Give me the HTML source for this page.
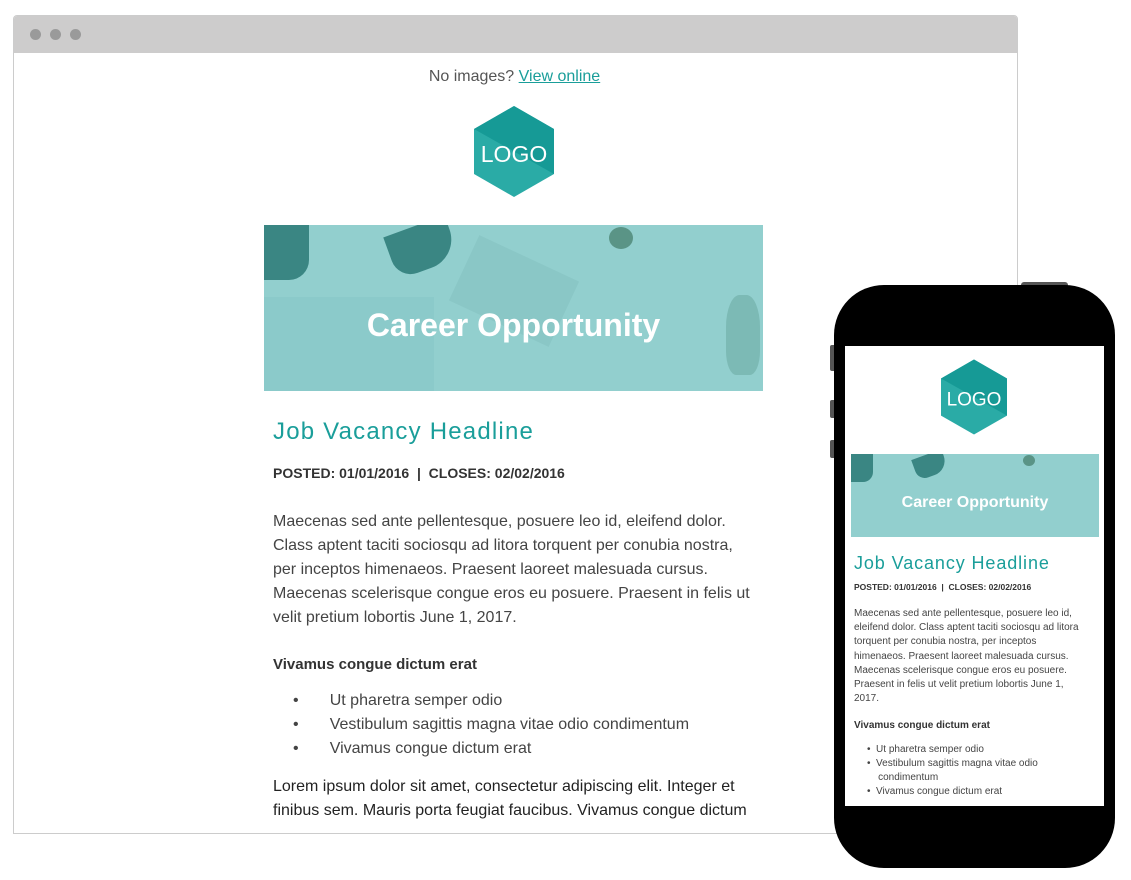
<!DOCTYPE html>
<html><head><style>
*{margin:0;padding:0;box-sizing:border-box}
body{width:1131px;height:880px;background:#fff;position:relative;overflow:hidden;font-family:"Liberation Sans",Arial,sans-serif;color:#444}
.a{position:absolute;white-space:nowrap}
.frame{position:absolute;left:13px;top:15px;width:1005px;height:819px;border:1px solid #ccc;border-radius:4px 4px 0 0;overflow:hidden;background:#fff}
.bar{position:absolute;left:0;top:0;width:100%;height:37px;background:#cdcccc}
.dot{position:absolute;top:13px;width:11px;height:11px;border-radius:50%;background:#9a9a9a}
.teal{color:#1a9e9a}
.banner{position:absolute;background:#92cfce;overflow:hidden}
.banner .t{position:absolute;width:100%;text-align:center;color:#fff;font-weight:bold}
</style></head><body>
<div class="frame">
 <div class="bar"><div class="dot" style="left:16px"></div><div class="dot" style="left:36px"></div><div class="dot" style="left:56px"></div></div>
</div>
<div class="a" style="left:0;width:1029px;text-align:center;top:68px;font-size:16px;color:#555">No images? <span class="teal" style="text-decoration:underline">View online</span></div>
<svg class="a" style="left:474px;top:106px" width="80" height="91" viewBox="0 0 80 91">
<polygon points="40,0 80,23 80,68 40,91 0,68 0,23" fill="#2aaba6"/>
<polygon points="40,0 80,23 80,68 0,23" fill="#169a96"/>
<text x="40" y="56" text-anchor="middle" font-family="Liberation Sans" font-size="23" fill="#fff">LOGO</text></svg>
<div class="banner" style="left:264px;top:225px;width:499px;height:166px">
 <div class="a" style="left:0;top:0;width:45px;height:55px;background:#3a8683;border-radius:0 0 20px 0"></div>
 <div class="a" style="left:125px;top:0;width:65px;height:45px;background:#3a8683;border-radius:0 0 30px 20px;transform:rotate(-20deg)"></div>
 <div class="a" style="left:345px;top:2px;width:24px;height:22px;background:#5a9486;border-radius:50%"></div>
 <div class="a" style="left:0;top:72px;width:170px;height:94px;background:#8bcaca"></div>
 <div class="a" style="left:195px;top:30px;width:110px;height:72px;background:#8ac7c6;transform:rotate(25deg)"></div>
 <div class="a" style="left:462px;top:70px;width:34px;height:80px;background:#7cbab5;border-radius:40% 40% 30% 30%"></div>
 <div class="t" style="top:82px;font-size:32px">Career Opportunity</div>
</div>
<div class="a teal" style="left:273px;top:418px;font-size:24px;letter-spacing:1.2px">Job Vacancy Headline</div>
<div class="a" style="left:273px;top:465px;font-size:14px;font-weight:bold;color:#333">POSTED: 01/01/2016 &nbsp;|&nbsp; CLOSES: 02/02/2016</div>
<div class="a" style="left:273px;top:510px;font-size:16px;line-height:24px;color:#444">Maecenas sed ante pellentesque, posuere leo id, eleifend dolor.<br>Class aptent taciti sociosqu ad litora torquent per conubia nostra,<br>per inceptos himenaeos. Praesent laoreet malesuada cursus.<br>Maecenas scelerisque congue eros eu posuere. Praesent in felis ut<br>velit pretium lobortis June 1, 2017.</div>
<div class="a" style="left:273px;top:656px;font-size:15px;font-weight:bold;color:#333">Vivamus congue dictum erat</div>
<div class="a" style="left:293px;top:689px;font-size:16px;line-height:24px;color:#444">•&nbsp;&nbsp;&nbsp;&nbsp;&nbsp;&nbsp;&nbsp;Ut pharetra semper odio<br>•&nbsp;&nbsp;&nbsp;&nbsp;&nbsp;&nbsp;&nbsp;Vestibulum sagittis magna vitae odio condimentum<br>•&nbsp;&nbsp;&nbsp;&nbsp;&nbsp;&nbsp;&nbsp;Vivamus congue dictum erat</div>
<div class="a" style="left:273px;top:775px;font-size:16px;line-height:24px;color:#222">Lorem ipsum dolor sit amet, consectetur adipiscing elit. Integer et<br>finibus sem. Mauris porta feugiat faucibus. Vivamus congue dictum</div>

<!-- phone -->
<div class="a" style="left:1021px;top:282px;width:47px;height:8px;background:#555;border-radius:3px"></div>
<div class="a" style="left:830px;top:345px;width:6px;height:26px;background:#555;border-radius:2px"></div>
<div class="a" style="left:830px;top:400px;width:6px;height:18px;background:#555;border-radius:2px"></div>
<div class="a" style="left:830px;top:440px;width:6px;height:18px;background:#555;border-radius:2px"></div>
<div class="a" style="left:834px;top:285px;width:281px;height:583px;background:#000;border-radius:50px"></div>
<div class="a" style="left:845px;top:346px;width:259px;height:460px;background:#fff;overflow:hidden">
 <svg class="a" style="left:96px;top:13px" width="66" height="76" viewBox="0 0 80 91">
 <polygon points="40,0 80,23 80,68 40,91 0,68 0,23" fill="#2aaba6"/>
 <polygon points="40,0 80,23 80,68 0,23" fill="#169a96"/>
 <text x="40" y="56" text-anchor="middle" font-family="Liberation Sans" font-size="23" fill="#fff">LOGO</text></svg>
 <div class="banner" style="left:6px;top:108px;width:248px;height:83px">
  <div class="a" style="left:0;top:0;width:22px;height:28px;background:#3a8683;border-radius:0 0 10px 0"></div>
  <div class="a" style="left:63px;top:0;width:32px;height:22px;background:#3a8683;border-radius:0 0 15px 10px;transform:rotate(-20deg)"></div>
  <div class="a" style="left:172px;top:1px;width:12px;height:11px;background:#5a9486;border-radius:50%"></div>
  <div class="t" style="top:40px;font-size:16px">Career Opportunity</div>
 </div>
 <div class="a teal" style="left:9px;top:207px;font-size:18px;letter-spacing:0.9px">Job Vacancy Headline</div>
 <div class="a" style="left:9px;top:236px;font-size:8.5px;font-weight:bold;color:#333">POSTED: 01/01/2016 &nbsp;|&nbsp; CLOSES: 02/02/2016</div>
 <div class="a" style="left:9px;top:261px;font-size:10px;line-height:14.2px;color:#444">Maecenas sed ante pellentesque, posuere leo id,<br>eleifend dolor. Class aptent taciti sociosqu ad litora<br>torquent per conubia nostra, per inceptos<br>himenaeos. Praesent laoreet malesuada cursus.<br>Maecenas scelerisque congue eros eu posuere.<br>Praesent in felis ut velit pretium lobortis June 1,<br>2017.</div>
 <div class="a" style="left:9px;top:374px;font-size:10px;font-weight:bold;color:#333">Vivamus congue dictum erat</div>
 <div class="a" style="left:22px;top:397px;font-size:10px;line-height:14px;color:#444">•&nbsp;&nbsp;Ut pharetra semper odio<br>•&nbsp;&nbsp;Vestibulum sagittis magna vitae odio<br>&nbsp;&nbsp;&nbsp;&nbsp;condimentum<br>•&nbsp;&nbsp;Vivamus congue dictum erat</div>
</div>
</body></html>
